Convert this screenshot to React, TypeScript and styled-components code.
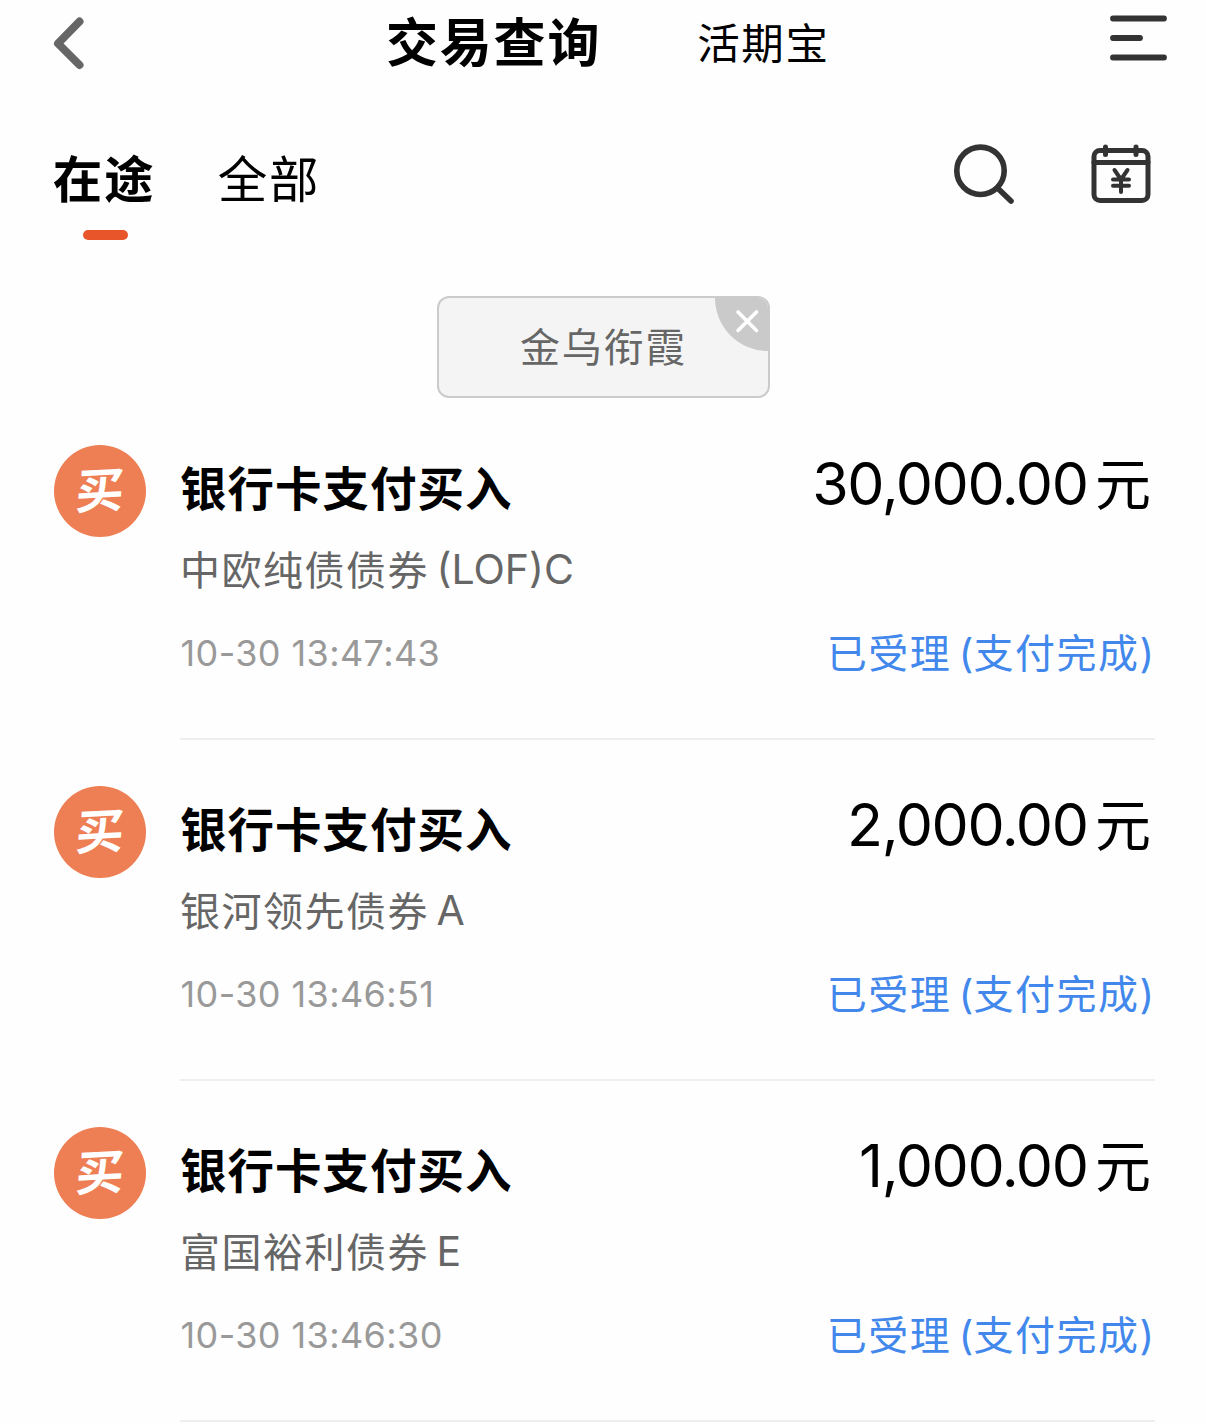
import React from "react";
import styled, { createGlobalStyle } from "styled-components";

const GlobalStyle = createGlobalStyle`
  * { box-sizing: border-box; }
  body { margin: 0; background: #fefefe; overflow: hidden; }
`;

const Page = styled.main`
  width: 1206px;
  height: 1424px;
  overflow: hidden;
  background: #fefefe;
  color: #000;
  font-family: Inter, "Noto Sans CJK SC", sans-serif;
`;

const Icon = styled.svg`
  display: block;
  flex: none;
  fill: none;
  stroke: #333;
  stroke-linecap: round;
  stroke-linejoin: round;
`;

const Header = styled.header`
  display: flex;
  align-items: center;
  height: 86px;
  padding: 0 38px 0 52px;
`;

const Title = styled.h1`
  margin: 0 0 0 302px;
  padding-top: 2px;
  font-size: 52px;
  line-height: 86px;
  font-weight: 600;
  letter-spacing: 1.8px;
`;

const Product = styled.span`
  margin-left: 96px;
  padding-top: 1px;
  font-size: 42.5px;
  line-height: 86px;
  letter-spacing: 1.6px;
`;

const MenuButton = styled.div`
  margin-left: auto;
  padding-bottom: 11px;
`;

const TabBar = styled.nav`
  display: flex;
  height: 210px;
  padding: 52px 54px 0 52px;
`;

const Tab = styled.div<{ $active?: boolean }>`
  display: flex;
  flex-direction: column;
  align-items: center;
  width: 104px;
  margin-right: 61px;
  font-size: 49.5px;
  line-height: 84px;
  letter-spacing: 1.8px;
  white-space: nowrap;
  font-weight: ${(p) => (p.$active ? 600 : 400)};
`;

const Indicator = styled.i`
  width: 45px;
  height: 10px;
  margin: 8px 0 0 2px;
  border-radius: 5px;
  background: #e9552b;
`;

const Tools = styled.div`
  display: flex;
  gap: 75px;
  margin-left: auto;
  padding-top: 4px;
`;

const Chip = styled.div`
  position: relative;
  width: 333px;
  height: 102px;
  margin: 0 auto;
  padding-left: 1px;
  overflow: hidden;
  border: 2px solid #cbcbcb;
  border-radius: 12px;
  background: #f4f4f4;
  color: #666;
  font-size: 40px;
  line-height: 100px;
  letter-spacing: 1.7px;
  text-align: center;
`;

const ChipClose = styled.div`
  position: absolute;
  top: 0;
  right: 0;
  width: 53px;
  height: 53px;
  border-bottom-left-radius: 53px;
  background: #cacaca;
`;

const List = styled.section`
  padding: 1px 51px 0 54px;
`;

const Row = styled.article`
  display: flex;
  gap: 34px;
  height: 341px;
`;

const Badge = styled.div`
  display: flex;
  align-items: center;
  justify-content: center;
  width: 92px;
  height: 92px;
  margin-top: 46px;
  border-radius: 50%;
  background: #ee7f54;
  color: #fff;
`;

const BadgeText = styled.span`
  font-size: 48px;
  line-height: 92px;
  font-weight: 700;
  transform: skew(-3deg, -3deg);
`;

const Content = styled.div`
  flex: 1;
  padding-top: 46px;
  border-bottom: 2px solid #eee;
`;

const Line = styled.div<{ $height: number }>`
  display: flex;
  justify-content: space-between;
  height: ${(p) => p.$height}px;
  line-height: ${(p) => p.$height}px;
  white-space: nowrap;
`;

const Kind = styled.h2`
  margin: 0;
  padding-top: 1px;
  font-size: 46.5px;
  font-weight: 600;
  letter-spacing: 1px;
`;

const Amount = styled.div`
  display: flex;
  gap: 7.5px;
  padding-right: 4px;
  font-size: 59px;
  line-height: 78px;
  letter-spacing: -1.4px;
`;

const Unit = styled.span`
  padding-top: 1px;
  font-size: 56px;
  letter-spacing: 0;
`;

const Fund = styled.div`
  display: flex;
  gap: 7.5px;
  color: #666;
  font-size: 40px;
  letter-spacing: 1.5px;
`;

const Latin = styled.span`
  font-size: 41px;
  line-height: 77px;
  letter-spacing: 0;
`;

const Time = styled.time`
  padding-left: 0.5px;
  color: #999;
  font-size: 36px;
  line-height: 84px;
  letter-spacing: 0.4px;
`;

const Status = styled.div`
  display: flex;
  padding-right: 1px;
  color: #4288ec;
  font-size: 40px;
  letter-spacing: 1.5px;
`;

const Paren = styled.span<{ $open?: boolean }>`
  margin-left: ${(p) => (p.$open ? 7.5 : 0)}px;
  letter-spacing: 0;
`;

const records = [
  { amount: "30,000.00", fund: "中欧纯债债券", suffix: "(LOF)C", time: "10-30 13:47:43" },
  { amount: "2,000.00", fund: "银河领先债券", suffix: "A", time: "10-30 13:46:51" },
  { amount: "1,000.00", fund: "富国裕利债券", suffix: "E", time: "10-30 13:46:30" },
];

export default function App() {
  return (
    <Page lang="zh-CN">
      <GlobalStyle />
      <Header>
        <Icon width="32" height="54" viewBox="0 0 32 54" style={{ stroke: "#666" }}>
          <path d="M27.500 5.500 6 27.500 27.500 49" strokeWidth="8" />
        </Icon>
        <Title>交易查询</Title>
        <Product>活期宝</Product>
        <MenuButton>
          <Icon width="60" height="48" viewBox="0 0 60 48" strokeWidth="5.8">
            <path d="M5 4.500h51M5 24h27M5 43.500h51" />
          </Icon>
        </MenuButton>
      </Header>
      <TabBar>
        <Tab $active>
          在途
          <Indicator />
        </Tab>
        <Tab>全部</Tab>
        <Tools>
          <Icon width="64" height="64" viewBox="0 0 64 64" strokeWidth="5.6">
            <circle cx="29.500" cy="28.800" r="23.700" />
            <path d="m47 46.500 13 12.500" />
          </Icon>
          <Icon width="62" height="64" viewBox="0 0 62 64" strokeWidth="5">
            <rect x="4" y="8.500" width="54" height="50" rx="6" />
            <path d="M4 20.500h54M15.500 5v7.500M46 5v7.500" />
            <path d="m24.500 28 6.500 9.500L37.500 28M31 37.500V50M23 37.500h16M23 43.800h16" strokeWidth="4" />
          </Icon>
        </Tools>
      </TabBar>
      <Chip>
        金乌衔霞
        <ChipClose>
          <Icon width="53" height="53" viewBox="0 0 53 53" strokeWidth="3.6" style={{ stroke: "#fff" }}>
            <path d="m23 14 18.500 18.500M41.500 14 23 32.500" />
          </Icon>
        </ChipClose>
      </Chip>
      <List>
        {records.map((r) => (
          <Row key={r.time}>
            <Badge>
              <BadgeText>买</BadgeText>
            </Badge>
            <Content>
              <Line $height={86}>
                <Kind>银行卡支付买入</Kind>
                <Amount>
                  <span>{r.amount}</span>
                  <Unit>元</Unit>
                </Amount>
              </Line>
              <Line $height={80}>
                <Fund>
                  <span>{r.fund}</span>
                  <Latin>{r.suffix}</Latin>
                </Fund>
              </Line>
              <Line $height={86}>
                <Time>{r.time}</Time>
                <Status>
                  <span>已受理</span>
                  <Paren $open>(</Paren>
                  <span>支付完成</span>
                  <Paren>)</Paren>
                </Status>
              </Line>
            </Content>
          </Row>
        ))}
      </List>
    </Page>
  );
}
